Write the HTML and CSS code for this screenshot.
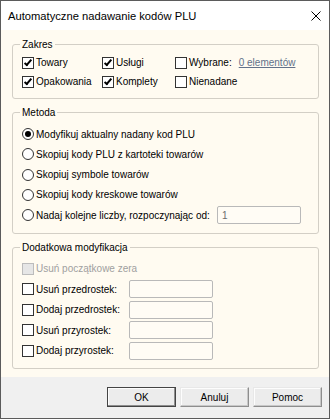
FILE: index.html
```html
<!DOCTYPE html>
<html lang="pl">
<head>
<meta charset="utf-8">
<title>Automatyczne nadawanie kodów PLU</title>
<link rel="stylesheet" href="styles.css">
</head>
<body>
<div class="window">
  <div class="titlebar">
    <span class="title">Automatyczne nadawanie kodów PLU</span>
    <svg class="close" width="10" height="10" viewBox="0 0 10 10"><path d="M0.5 0.5 L9.5 9.5 M9.5 0.5 L0.5 9.5" stroke="#000" stroke-width="1" fill="none"/></svg>
  </div>
  <div class="content">
    <fieldset class="group">
      <legend>Zakres</legend>
      <div class="grid">
        <label class="opt"><span class="cb checked"></span>Towary</label>
        <label class="opt"><span class="cb checked"></span>Usługi</label>
        <label class="opt"><span class="cb"></span>Wybrane:<a class="link">0 elementów</a></label>
        <label class="opt"><span class="cb checked"></span>Opakowania</label>
        <label class="opt"><span class="cb checked"></span>Komplety</label>
        <label class="opt"><span class="cb"></span>Nienadane</label>
      </div>
    </fieldset>
    <fieldset class="group metoda">
      <legend>Metoda</legend>
      <div class="list">
        <label class="opt"><span class="rb selected"></span>Modyfikuj aktualny nadany kod PLU</label>
        <label class="opt"><span class="rb"></span>Skopiuj kody PLU z kartoteki towarów</label>
        <label class="opt"><span class="rb"></span>Skopiuj symbole towarów</label>
        <label class="opt"><span class="rb"></span>Skopiuj kody kreskowe towarów</label>
        <label class="opt"><span class="rb"></span><span class="lbl-start">Nadaj kolejne liczby, rozpoczynając od:</span><span class="field num">1</span></label>
      </div>
    </fieldset>
    <fieldset class="group extra">
      <legend>Dodatkowa modyfikacja</legend>
      <div class="list">
        <label class="opt disabled"><span class="cb"></span>Usuń początkowe zera</label>
        <label class="opt"><span class="cb"></span><span class="lbl">Usuń przedrostek:</span><span class="field"></span></label>
        <label class="opt"><span class="cb"></span><span class="lbl">Dodaj przedrostek:</span><span class="field"></span></label>
        <label class="opt"><span class="cb"></span><span class="lbl">Usuń przyrostek:</span><span class="field"></span></label>
        <label class="opt"><span class="cb"></span><span class="lbl">Dodaj przyrostek:</span><span class="field"></span></label>
      </div>
    </fieldset>
  </div>
  <div class="buttons">
    <button class="btn default">OK</button>
    <button class="btn">Anuluj</button>
    <button class="btn">Pomoc</button>
  </div>
</div>
</body>
</html>
```
FILE: styles.css
```css
html, body {
  margin: 0;
  padding: 0;
  background: #ffffff;
}
body {
  width: 330px;
  height: 419px;
  font-family: "Liberation Sans", Arial, sans-serif;
  font-size: 10px;
  color: #000;
}
.window {
  box-sizing: border-box;
  width: 330px;
  height: 419px;
  border: 1px solid #5b5b5b;
  display: flex;
  flex-direction: column;
}
.titlebar {
  height: 29px;
  flex: none;
  background: #ffffff;
  display: flex;
  align-items: center;
  justify-content: space-between;
  padding: 0 8px 0 7px;
}
.title {
  font-size: 11.2px;
  color: #000;
}
.close {
  display: block;
}
.content {
  flex: 1;
  background: #fffbf1;
  padding: 8px 10px 0 11px;
  display: flex;
  flex-direction: column;
}
.group {
  margin: 0 0 7px 0;
  padding: 0 9px;
  border: 1px solid #d3cfc6;
  border-radius: 3px;
  min-width: 0;
}
.group legend {
  padding: 0 2px;
  margin-left: -2px;
  line-height: 13px;
  height: 13px;
}
.grid {
  display: grid;
  grid-template-columns: 80px 73px 1fr;
  padding: 2px 0 7px 0;
}
.list {
  display: flex;
  flex-direction: column;
}
.metoda .list {
  padding: 5px 0 8px 0;
}
.extra .list {
  padding: 4px 0 7px 0;
}
.opt {
  display: flex;
  align-items: center;
  height: 19px;
  white-space: nowrap;
}
.metoda .opt {
  height: 20.25px;
}
.extra .opt {
  height: 20.5px;
}
.cb {
  box-sizing: border-box;
  width: 12px;
  height: 12px;
  border: 1px solid #333;
  background: #fff;
  flex: none;
  position: relative;
  margin-right: 2px;
}
.cb.checked::after {
  content: "";
  position: absolute;
  left: 3px;
  top: 0;
  width: 2px;
  height: 6px;
  border-right: 2px solid #000;
  border-bottom: 2px solid #000;
  transform: rotate(40deg);
}
.rb {
  box-sizing: border-box;
  width: 12px;
  height: 12px;
  border: 1px solid #333;
  border-radius: 50%;
  background: #fff;
  flex: none;
  position: relative;
  margin-right: 2px;
}
.rb.selected::after {
  content: "";
  position: absolute;
  left: 2px;
  top: 2px;
  width: 6px;
  height: 6px;
  border-radius: 50%;
  background: #000;
}
.disabled {
  color: #a0a0a0;
}
.disabled .cb {
  border-color: #bcbcbc;
  background: #e6e6e6;
}
.link {
  margin-left: 7px;
  color: #62718a;
  text-decoration: underline;
}
.lbl-start {
  width: 181px;
  flex: none;
}
.lbl {
  width: 93px;
  flex: none;
}
.field {
  box-sizing: border-box;
  width: 84px;
  height: 18px;
  border: 1px solid #b9b9b9;
  border-radius: 2px;
  background: #fffcf5;
  display: flex;
  align-items: center;
  padding-left: 4px;
  color: #6d6d6d;
  flex: none;
}
.buttons {
  height: 41px;
  flex: none;
  background: #f0f0f0;
  display: flex;
  justify-content: flex-end;
  align-items: flex-start;
  gap: 4px;
  padding: 10px 7px 0 0;
  box-sizing: border-box;
}
.btn {
  box-sizing: border-box;
  width: 69px;
  height: 20px;
  font: inherit;
  color: #000;
  background: #ececec;
  border: 1px solid;
  border-color: #e8e8e8 #8e8e8e #8e8e8e #e8e8e8;
  box-shadow: inset -1px -1px 0 #c8c8c8, inset 1px 1px 0 #fdfdfd;
  padding: 0;
  margin: 0;
}
.btn.default {
  border-color: #444;
  box-shadow: inset -1px -1px 0 #8e8e8e, inset 1px 1px 0 #fdfdfd;
}
```
